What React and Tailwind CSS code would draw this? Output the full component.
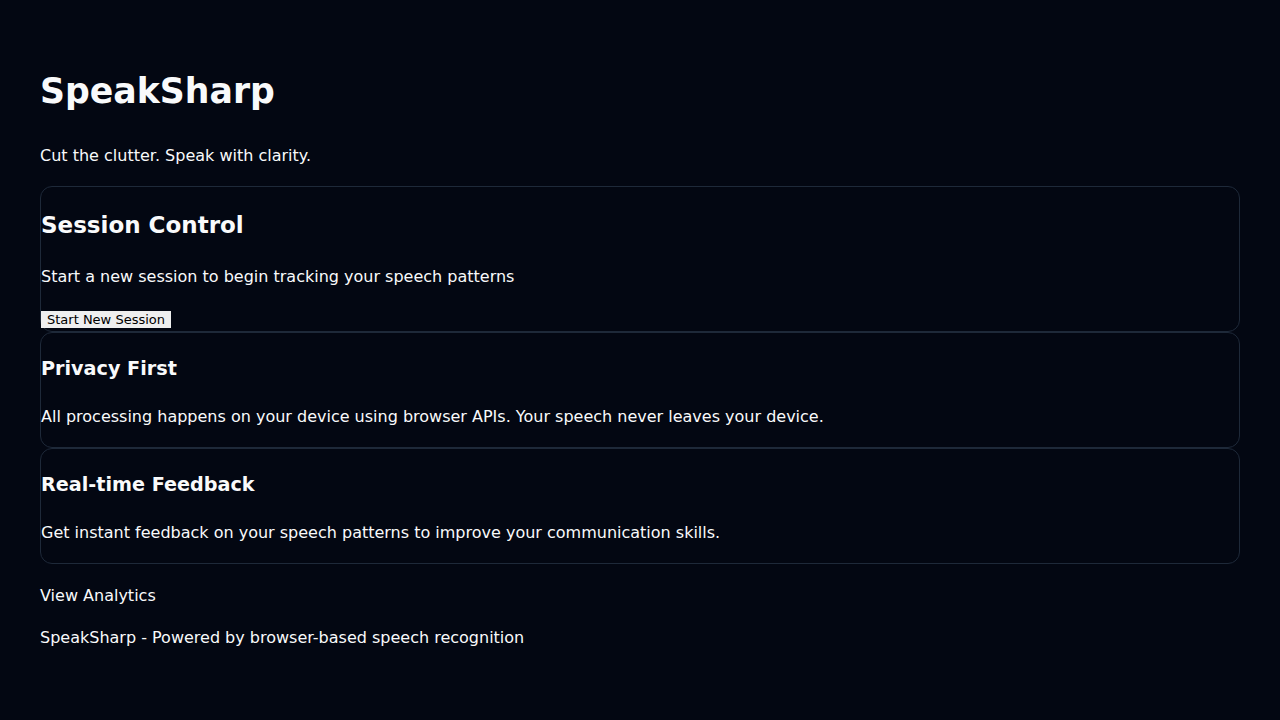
import React from 'react';

const Card = ({ title, titleClass, children }) => (
  <div className="rounded-xl border border-gray-800 bg-[#030712]">
    <h2 className={titleClass}>{title}</h2>
    {children}
  </div>
);

export default function App() {
  return (
    <div className="min-h-screen bg-[#030712] text-gray-50 font-['DejaVu_Sans',sans-serif] px-10 pt-[71px] pb-10">
      <h1 className="text-[34.7px] leading-[40px] font-bold">SpeakSharp</h1>
      <p className="mt-[33px] text-base leading-6">Cut the clutter. Speak with clarity.</p>

      <div className="mt-[18px] flex flex-col">
        <Card title="Session Control" titleClass="pt-[22px] text-[23px] leading-8 font-bold">
          <p className="mt-6 text-base leading-6">Start a new session to begin tracking your speech patterns</p>
          <div className="mt-[22px] pb-[3px] leading-none">
            <button className="bg-[#efefef] text-black text-[13px] leading-[17px] px-[6px] h-[17px]">
              Start New Session
            </button>
          </div>
        </Card>
        <Card title="Privacy First" titleClass="pt-[22px] text-[19.2px] leading-7 font-bold">
          <p className="mt-[22px] pb-[18px] text-base leading-6">
            All processing happens on your device using browser APIs. Your speech never leaves your device.
          </p>
        </Card>
        <Card title="Real-time Feedback" titleClass="pt-[22px] text-[19.2px] leading-7 font-bold">
          <p className="mt-[22px] pb-[18px] text-base leading-6">
            Get instant feedback on your speech patterns to improve your communication skills.
          </p>
        </Card>
      </div>

      <a href="#" className="block mt-5 text-base leading-6">View Analytics</a>
      <footer className="mt-[18px] text-base leading-6">SpeakSharp - Powered by browser-based speech recognition</footer>
    </div>
  );
}
